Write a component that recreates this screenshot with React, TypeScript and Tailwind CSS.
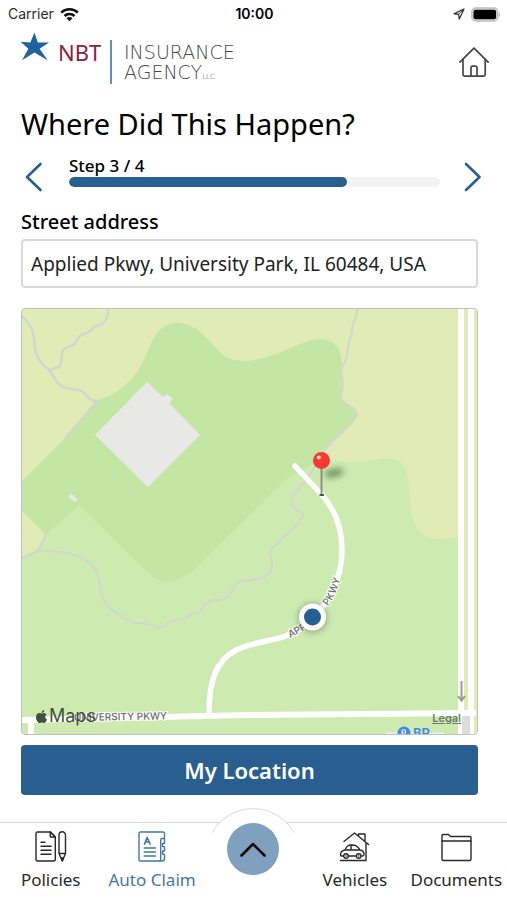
import { useState, type ReactNode } from "react";
import { FaApple } from "react-icons/fa";

const STEP = 3;
const STEP_COUNT = 4;

function StatusBar() {
  return (
    <div className="grid h-7 grid-cols-3 items-center pl-2 pr-1.5 font-['Inter','Liberation_Sans',sans-serif] text-sm text-[#2b2b2b]">
      <div className="flex items-center gap-1.5">
        <span>Carrier</span>
        <svg width="19" height="15" viewBox="0 0 19 15" fill="none" stroke="#111" strokeWidth="2.6" aria-hidden="true">
          <path d="M1.2 5.6a12 12 0 0 1 16.6 0" />
          <path d="M4.5 9a7.2 7.2 0 0 1 10 0" />
          <path d="M9.5 14.2 6.5 11.3a4.4 4.4 0 0 1 6 0z" fill="#111" stroke="none" />
        </svg>
      </div>
      <span className="text-center font-semibold text-black">10:00</span>
      <div className="flex items-center justify-end gap-1.5">
        <svg width="12" height="12" viewBox="0 0 12 12" fill="none" stroke="#333" strokeWidth="1.3" strokeLinejoin="round" aria-hidden="true">
          <path d="M11 1 1 5.8l4.6.5.7 4.7z" />
          <path d="M11 1 5.6 6.3" strokeWidth=".8" />
        </svg>
        <svg width="30" height="15" viewBox="0 0 30 15" aria-hidden="true">
          <rect x=".8" y="1" width="26" height="13" rx="4" fill="#ddd" stroke="#bdbdbd" strokeWidth="1.4" />
          <rect x="2.5" y="2.7" width="22.6" height="9.6" rx="2" fill="#000" />
          <path d="M28 5.2c1.6.6 1.6 4 0 4.6z" fill="#bdbdbd" />
        </svg>
      </div>
    </div>
  );
}

function Header() {
  return (
    <header className="flex items-center justify-between pl-5 pr-3.5 pt-2">
      <div className="flex items-start">
        <svg width="30" height="30" viewBox="0 0 30 30" aria-hidden="true" className="-mt-1">
          <path d="M14.5.5 17.8 10.5 29 10.4 19.6 16.8 27.8 28.5 14.5 20.6 2 28.3 8.4 16.7.5 9.8l9.8.6z" fill="#1f64a0" />
        </svg>
        <span className="ml-2 w-11 pt-1 font-['Noto_Sans',sans-serif] text-[22px] leading-6 text-[#8c2340]">NBT</span>
        <span className="ml-2 mt-1 h-11 w-0.5 bg-[#5d93ba]" />
        <div className="ml-3 pt-1.5 font-['DejaVu_Sans',sans-serif] text-[19px] font-extralight leading-5 text-[#48484a]">
          <div>INSURANCE</div>
          <div>
            AGENCY<span className="text-[7px]">LLC</span>
          </div>
        </div>
      </div>
      <a href="#home" aria-label="Home" className="p-1">
        <svg width="30" height="30" viewBox="0 0 30 30" fill="none" stroke="#45474c" strokeWidth="1.7" strokeLinecap="round" strokeLinejoin="round">
          <path d="M.9 15.2 15 1.2l14.1 14" />
          <path d="M4 12.3V27.5a1.6 1.6 0 0 0 1.6 1.6h19a1.6 1.6 0 0 0 1.6-1.6V12.3" />
          <path d="M12 29v-8.4a1.5 1.5 0 0 1 1.5-1.5h3a1.5 1.5 0 0 1 1.5 1.5V29" />
        </svg>
      </a>
    </header>
  );
}

function StepProgress() {
  return (
    <div className="mt-3 flex items-start justify-between pl-1">
      <button type="button" aria-label="Previous step" className="mt-2">
        <svg width="18" height="30" viewBox="0 0 18 30" fill="none" stroke="#275f93" strokeWidth="2.6" strokeLinecap="round" strokeLinejoin="round">
          <path d="M15.5 2 2 15l13.5 13" />
        </svg>
      </button>
      <div className="mx-6 mt-px flex-1 pl-0.5">
        <div className="text-[17px] font-medium leading-[22px]">
          Step {STEP} / {STEP_COUNT}
        </div>
        <div className="h-2.5 overflow-hidden rounded-full bg-[#f3f3f4]">
          <div className="h-full rounded-full bg-[#275f90]" style={{ width: `${(STEP / STEP_COUNT) * 100}%` }} />
        </div>
      </div>
      <button type="button" aria-label="Next step" className="-mr-1 mt-2">
        <svg width="18" height="30" viewBox="0 0 18 30" fill="none" stroke="#275f93" strokeWidth="2.6" strokeLinecap="round" strokeLinejoin="round">
          <path d="M2 2l13.5 13L2 28" />
        </svg>
      </button>
    </div>
  );
}

function LocationMap() {
  return (
    <div className="relative mt-5 overflow-hidden rounded border border-[#bfc2bb]">
      <svg viewBox="22 309 455 425" className="block w-full bg-[#cdebb1]" role="img" aria-label="Map of Applied Pkwy">
        <defs>
          <filter id="soft" x="-50%" y="-50%" width="200%" height="200%">
            <feGaussianBlur stdDeviation="3" />
          </filter>
          <path id="applied-start" d="M290 638Q306 631 320 618" />
          <path id="applied-end" d="M328 606Q338 592 343 570" />
        </defs>

        {/* Land cover */}
        <path d="M22 309H477V734H463V537L445 539C425 540 416 532 412 515C408 495 411 470 400 462C385 452 365 468 335 460L310 470L60 450L22 482Z" fill="#e0ebb6" />
        <path d="M22 511 46 535 36 551 22 557Z" fill="#e0ebb6" />
        <path d="M22 481 66 437 97 400C125 393 140 372 148 350C156 332 163 323 177 323C195 323 206 337 215 347C224 358 233 361 244 361C275 360 300 339 321 339C336 340 342 350 342 367L343 385 340 398 348 406 357 413 352 423 325 450 318 462 290 476 200 564C180 583 169 586 153 577L148 573 79 505 46 535 22 511Z" fill="#c4e6a5" />
        <path d="M318 462 332 459 320 490 298 472Z" fill="#cdebb1" />

        {/* Buildings */}
        <path d="M147 382 163 397 167 394 173 399 169 403 200 435 148 487 95 435Z" fill="#e8e8e7" />
        <path d="M71 494 77 499 75 502 69 497Z" fill="#e8e8e7" stroke="#e8e8e7" />

        {/* Trails */}
        <g fill="none" stroke="#d3d5ce" strokeWidth="2.4" strokeLinecap="round" strokeLinejoin="round">
          <path d="M22 316C28 322 33 328 34 338C34 352 38 362 48 369C54 374 55 384 64 387C72 391 80 387 86 395Q91 401 97 401L66 437" />
          <path d="M108 309C109 320 103 325 95 326C88 335 82 333 79 337C73 349 69 345 63 350C60 359 63 367 56 368L50 370" />
          <path d="M357 309C358 318 350 325 352 334C346 343 350 357 342 367C340 377 346 383 341 395C340 407 355 404 357 414C353 427 332 437 322 454L310 475 297 491C288 499 291 507 298 511Q307 516 301 518C294 532 283 535 280 540C277 545 270 547 270 555C275 568 271 574 261 578Q252 581 240 581C233 585 232 597 223 599C216 602 212 598 205 604C199 616 195 612 190 615C185 621 179 619 175 621C166 621 166 628 160 628C151 628 155 622 135 623C120 618 111 610 105 602C99 593 101 579 96 571C90 559 73 550 38 551L46 535" strokeWidth="2" />
          <path d="M38 551 22 558" />
        </g>

        {/* Roads */}
        <g fill="none" stroke="#fff" strokeWidth="6">
          <path d="M295 466 322 495C339 514 342 536 342 550C342 580 327 608 304 626C282 643 262 638 236 650C216 661 209 680 209 714" strokeWidth="5.5" strokeLinecap="round" />
          <path d="M22 720 250 715 476 713M31 720V734M461 309V734M471 309V734" />
        </g>
        <path d="M462 716h8v18h-8z" fill="#dedcd7" />
        <path d="M461.5 681V700M458 696l3.5 4.5 3.5-4.5" fill="none" stroke="#989b98" strokeWidth="2" />

        {/* Road labels */}
        <g fill="#686b67" stroke="#fff" strokeWidth="2" paintOrder="stroke" fontFamily="Inter, Liberation Sans, sans-serif" fontWeight="500">
          <text x="74" y="721" fontSize="10" transform="rotate(-1 74 721)">UNIVERSITY PKWY</text>
          <text fontSize="10"><textPath href="#applied-start">APPL</textPath></text>
          <text fontSize="10"><textPath href="#applied-end">PKWY</textPath></text>
        </g>
        <path d="M386 734h58" stroke="#eee" strokeWidth="3" />
        <circle cx="404" cy="733" r="6.5" fill="#3f8be8" />
        <path d="M402 736v-6h3.5v3H402" fill="none" stroke="#fff" />
        <text x="413" y="738" fontSize="13" fontWeight="600" fill="#3f8be8" fontFamily="Inter, sans-serif">BP</text>

        {/* Dropped pin */}
        <ellipse cx="334" cy="473" rx="10" ry="4.5" fill="#3e5d30" opacity=".6" filter="url(#soft)" transform="rotate(-12 334 473)" />
        <path d="M321.5 468V494" stroke="#8e928c" strokeWidth="2" />
        <path d="M319.5 495h4.5" stroke="#50564e" strokeWidth="2" />
        <circle cx="321.5" cy="460.5" r="8.5" fill="#fb3830" />
        <circle cx="318.8" cy="457.5" r="2" fill="#ffe2de" />

        {/* Current position */}
        <circle cx="312.5" cy="618" r="15" fill="#49613c" opacity=".4" filter="url(#soft)" />
        <circle cx="312.5" cy="617" r="13.5" fill="#fff" />
        <circle cx="312.5" cy="617" r="8.5" fill="#255f91" />
      </svg>
      <div className="absolute bottom-1.5 left-3 flex items-center font-['Inter','Liberation_Sans',sans-serif] text-lg leading-6 text-[#43513c]">
        <FaApple size={15} aria-hidden="true" />
        <span>Maps</span>
      </div>
      <a href="#legal" className="absolute bottom-2 right-4 font-['Inter','Liberation_Sans',sans-serif] text-[11px] font-semibold leading-4 text-[#6f796a] underline">
        Legal
      </a>
    </div>
  );
}

function PoliciesIcon() {
  return (
    <svg width="32" height="31" viewBox="0 0 32 31" fill="none" stroke="currentColor" strokeWidth="1.4" strokeLinecap="round" strokeLinejoin="round">
      <path d="M15.5 1H2.5A1.5 1.5 0 0 0 1 2.5v26A1.5 1.5 0 0 0 2.5 30h16.3a1.5 1.5 0 0 0 1.5-1.5V6z" />
      <path d="M15.3 1v5h5zM6 11.3h4M6 15.3h10M6 19.3h10M6 23.3h10" />
      <path d="M24 4a3 3 0 0 1 6.5 0v18.5L27.3 30 24 22.5zM24 22.5h6.5" />
      <path d="m26.2 27 1.1 2.8 1.2-2.8z" fill="currentColor" />
    </svg>
  );
}

function ClaimIcon() {
  return (
    <svg width="28" height="31" viewBox="0 0 28 31" fill="none" stroke="currentColor" strokeWidth="1.4" strokeLinecap="round" strokeLinejoin="round">
      <path d="M26.5 7.5V2.5A1.5 1.5 0 0 0 25 1H2.5A1.5 1.5 0 0 0 1 2.5v26A1.5 1.5 0 0 0 2.5 30h18.7a1.5 1.5 0 0 0 1.5-1.5V9a1.5 1.5 0 0 1 1.5-1.5z" />
      <path d="M26.5 8v4.5h-2v3h1q1 0 1 1V20h-2v3h1q1 0 1 1v3.5q0 2.5-2.5 2.5h-2" />
      <path d="m6.5 13 2.7-6.5L12 13M7.5 11H11" strokeWidth="1.7" />
      <path d="M6.2 17h11.3M6.2 21h11.3M6.2 25h11.3" />
    </svg>
  );
}

function VehiclesIcon() {
  return (
    <svg width="31" height="31" viewBox="0 0 31 31" fill="none" stroke="currentColor" strokeWidth="1.4" strokeLinecap="round" strokeLinejoin="round">
      <path d="M5 10.5 15.5 2l14 11.5M19.5 5V3h6.5v7M27 12v17.5H1.5" />
      <path d="M4 25H2.3q-.8 0-.8-1.2c0-2.8 1.5-4.3 4.5-4.8 1.8-4 3-5 6.5-5 4.5 0 6 1 8.5 5 2.5.4 4 1.3 4 4 0 1.4-.4 2-1.2 2h-.8M10 25h6.5M6 19h15M12 14v5" />
      <circle cx="7" cy="25" r="2.3" />
      <circle cx="19.7" cy="25" r="2.3" />
      <path d="M7 25h.1M19.7 25h.1" />
    </svg>
  );
}

function DocumentsIcon() {
  return (
    <svg width="31" height="31" viewBox="0 0 31 31" fill="none" stroke="currentColor" strokeWidth="1.4" strokeLinecap="round" strokeLinejoin="round">
      <path d="M1 10V4.5Q1 3.500 2 3.500h5.500l2 2H29q1 0 1 1V10z" />
      <path d="M1 10v18q0 1.500 1.500 1.500h26Q30 29.500 30 28V10" />
    </svg>
  );
}

type TabProps = { href: string; label: string; icon: ReactNode; active?: boolean };

function Tab({ href, label, icon, active }: TabProps) {
  return (
    <a
      href={href}
      aria-current={active ? "page" : undefined}
      className={[
        "flex flex-col items-center gap-1.5 pt-2",
        active ? "text-[#3f78ae]" : "text-[#292929]",
      ].join(" ")}
    >
      {icon}
      <span className="text-[17px] leading-6">{label}</span>
    </a>
  );
}

function TabBar() {
  return (
    <nav className="mt-auto grid grid-cols-5 border-t border-[#d8d8d8] bg-white pb-2">
      <Tab href="#policies" label="Policies" icon={<PoliciesIcon />} />
      <Tab href="#claim" label="Auto Claim" icon={<ClaimIcon />} active />
      <div className="relative flex items-start justify-center">
        <svg width="84" height="27" viewBox="0 0 84 27" className="absolute -top-4 max-w-none" aria-hidden="true">
          <path d="M.8 26A47 47 0 0 1 83.2 26z" fill="#fff" />
          <path d="M.8 26A47 47 0 0 1 83.2 26" fill="none" stroke="#d8d8d8" />
        </svg>
        <button type="button" aria-label="Open menu" className="relative flex size-[52px] items-center justify-center rounded-full bg-[#7fa0be]">
          <svg width="26" height="15" viewBox="0 0 26 15" fill="none" stroke="#000" strokeWidth="2.5" strokeLinecap="round" strokeLinejoin="round">
            <path d="M1.5 13.5 13 2l11.5 11.5" />
          </svg>
        </button>
      </div>
      <Tab href="#vehicles" label="Vehicles" icon={<VehiclesIcon />} />
      <Tab href="#documents" label="Documents" icon={<DocumentsIcon />} />
    </nav>
  );
}

export default function App() {
  const [address, setAddress] = useState("Applied Pkwy, University Park, IL 60484, USA");

  return (
    <div className="flex min-h-screen flex-col bg-white font-['Noto_Sans','Open_Sans',sans-serif] text-black">
      <StatusBar />
      <Header />
      <main className="pb-[27px] pl-[21px] pr-[29px] pt-[19px]">
        <h1 className="text-[29px] leading-9">Where Did This Happen?</h1>
        <StepProgress />
        <label htmlFor="street" className="mt-4 block text-xl font-medium leading-[27px]">
          Street address
        </label>
        <input
          id="street"
          type="text"
          value={address}
          onChange={(e) => setAddress(e.target.value)}
          className="mt-1 block h-[49px] w-full rounded-sm border-2 border-[#dadada] px-2 text-[19px] text-[#222]"
        />
        <LocationMap />
        <button type="button" className="mt-2.5 h-[50px] w-full rounded bg-[#285f90] text-[22px] font-semibold text-white">
          My Location
        </button>
      </main>
      <TabBar />
    </div>
  );
}
